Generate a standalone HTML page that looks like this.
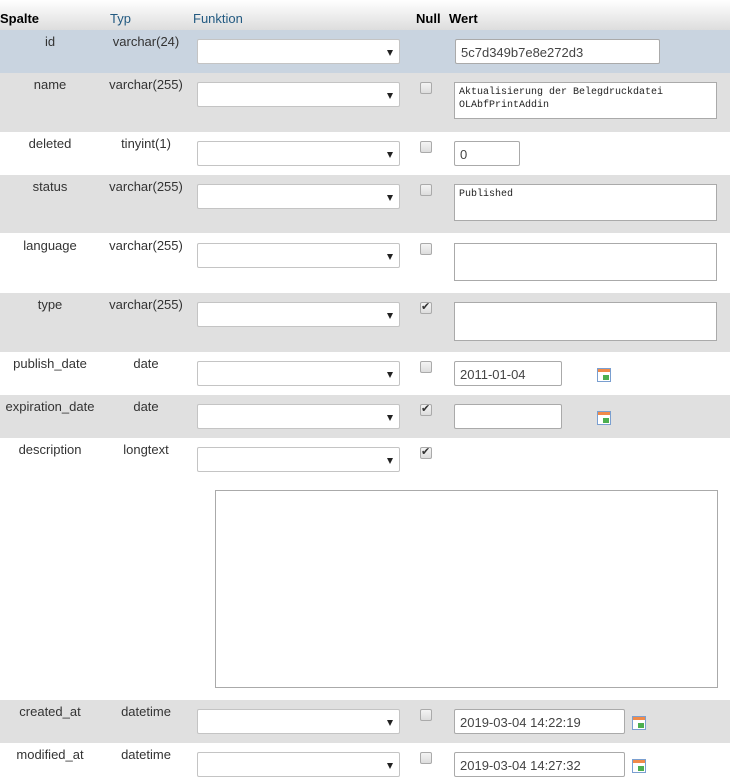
<!DOCTYPE html><html><head><style>
body{margin:0;width:745px;height:781px;overflow:hidden;background:#fff;font-family:"Liberation Sans",sans-serif;font-size:13px;color:#333;position:relative}
div,span{position:absolute;box-sizing:border-box}
.hdr{left:0;top:0;width:730px;height:30px;background:linear-gradient(#fff,#ddd)}
.h{top:11px;font-weight:bold;font-size:13px;color:#000}
.row{left:0;width:730px}
.g{background:#e0e0e0}
.c1{width:100px;text-align:center;left:0}
.c2{width:92px;text-align:center;left:100px}
.sel{left:197px;width:203px;height:25px;background:#fff;border:1px solid #c4c4c4;border-radius:2px}
.sel:after{content:"";position:absolute;right:6px;top:10px;border-left:3.5px solid transparent;border-right:3.5px solid transparent;border-top:6px solid #222}
.cb{left:420px;width:12px;height:12px;border:1px solid #aaa;border-radius:2px;background:linear-gradient(#f4f4f4,#ddd)}
.ck:after{content:"✔";position:absolute;left:0;top:-3px;font-size:11px;color:#333}
.in{background:#fff;border:1px solid #aaa;border-radius:2px;padding:5px 5px;font-size:13px;color:#444}
.ta{background:#fff;border:1px solid #aaa;font-family:"Liberation Mono",monospace;font-size:10px;padding:3px 4px;line-height:13px;color:#222}
.cal{width:14px;height:14px;border:1px solid #7a9fd0;background:linear-gradient(#f08a4a 0,#f08a4a 3px,#fff 3px);}
.cal:after{content:"";position:absolute;left:5px;top:6px;width:6px;height:5px;background:#4caf50}
</style></head><body>
<div class="hdr"></div>
<div class="h" style="left:0">Spalte</div>
<div class="h" style="left:110px;color:#235a81;font-weight:normal">Typ</div>
<div class="h" style="left:193px;color:#235a81;font-weight:normal">Funktion</div>
<div class="h" style="left:416px">Null</div>
<div class="h" style="left:449px">Wert</div>

<div class="row" style="top:30px;height:43px;background:#c9d4e0"></div>
<div class="row g" style="top:73px;height:59px"></div>
<div class="row g" style="top:175px;height:58px"></div>
<div class="row g" style="top:293px;height:59px"></div>
<div class="row g" style="top:395px;height:43px"></div>
<div class="row g" style="top:700px;height:43px"></div>

<div class="c1" style="top:34px">id</div><div class="c2" style="top:34px">varchar(24)</div><div class="sel" style="top:39px"></div>
<div class="in" style="left:455px;top:39px;width:205px;height:25px">5c7d349b7e8e272d3</div>

<div class="c1" style="top:77px">name</div><div class="c2" style="top:77px">varchar(255)</div><div class="sel" style="top:82px"></div><div class="cb" style="top:82px"></div>
<div class="ta" style="left:454px;top:82px;width:263px;height:37px">Aktualisierung der Belegdruckdatei<br>OLAbfPrintAddin</div>

<div class="c1" style="top:136px">deleted</div><div class="c2" style="top:136px">tinyint(1)</div><div class="sel" style="top:141px"></div><div class="cb" style="top:141px"></div>
<div class="in" style="left:454px;top:141px;width:66px;height:25px">0</div>

<div class="c1" style="top:179px">status</div><div class="c2" style="top:179px">varchar(255)</div><div class="sel" style="top:184px"></div><div class="cb" style="top:184px"></div>
<div class="ta" style="left:454px;top:184px;width:263px;height:37px">Published</div>

<div class="c1" style="top:238px">language</div><div class="c2" style="top:238px">varchar(255)</div><div class="sel" style="top:243px"></div><div class="cb" style="top:243px"></div>
<div class="ta" style="left:454px;top:243px;width:263px;height:38px"></div>

<div class="c1" style="top:297px">type</div><div class="c2" style="top:297px">varchar(255)</div><div class="sel" style="top:302px"></div><div class="cb ck" style="top:302px"></div>
<div class="ta" style="left:454px;top:302px;width:263px;height:39px"></div>

<div class="c1" style="top:356px">publish_date</div><div class="c2" style="top:356px">date</div><div class="sel" style="top:361px"></div><div class="cb" style="top:361px"></div>
<div class="in" style="left:454px;top:361px;width:108px;height:25px">2011-01-04</div><div class="cal" style="left:597px;top:368px"></div>

<div class="c1" style="top:399px">expiration_date</div><div class="c2" style="top:399px">date</div><div class="sel" style="top:404px"></div><div class="cb ck" style="top:404px"></div>
<div class="in" style="left:454px;top:404px;width:108px;height:25px"></div><div class="cal" style="left:597px;top:411px"></div>

<div class="c1" style="top:442px">description</div><div class="c2" style="top:442px">longtext</div><div class="sel" style="top:447px"></div><div class="cb ck" style="top:447px"></div>
<div class="ta" style="left:215px;top:490px;width:503px;height:198px"></div>

<div class="c1" style="top:704px">created_at</div><div class="c2" style="top:704px">datetime</div><div class="sel" style="top:709px"></div><div class="cb" style="top:709px"></div>
<div class="in" style="left:454px;top:709px;width:171px;height:25px">2019-03-04 14:22:19</div><div class="cal" style="left:632px;top:716px"></div>

<div class="c1" style="top:747px">modified_at</div><div class="c2" style="top:747px">datetime</div><div class="sel" style="top:752px"></div><div class="cb" style="top:752px"></div>
<div class="in" style="left:454px;top:752px;width:171px;height:25px">2019-03-04 14:27:32</div><div class="cal" style="left:632px;top:759px"></div>
</body></html>
